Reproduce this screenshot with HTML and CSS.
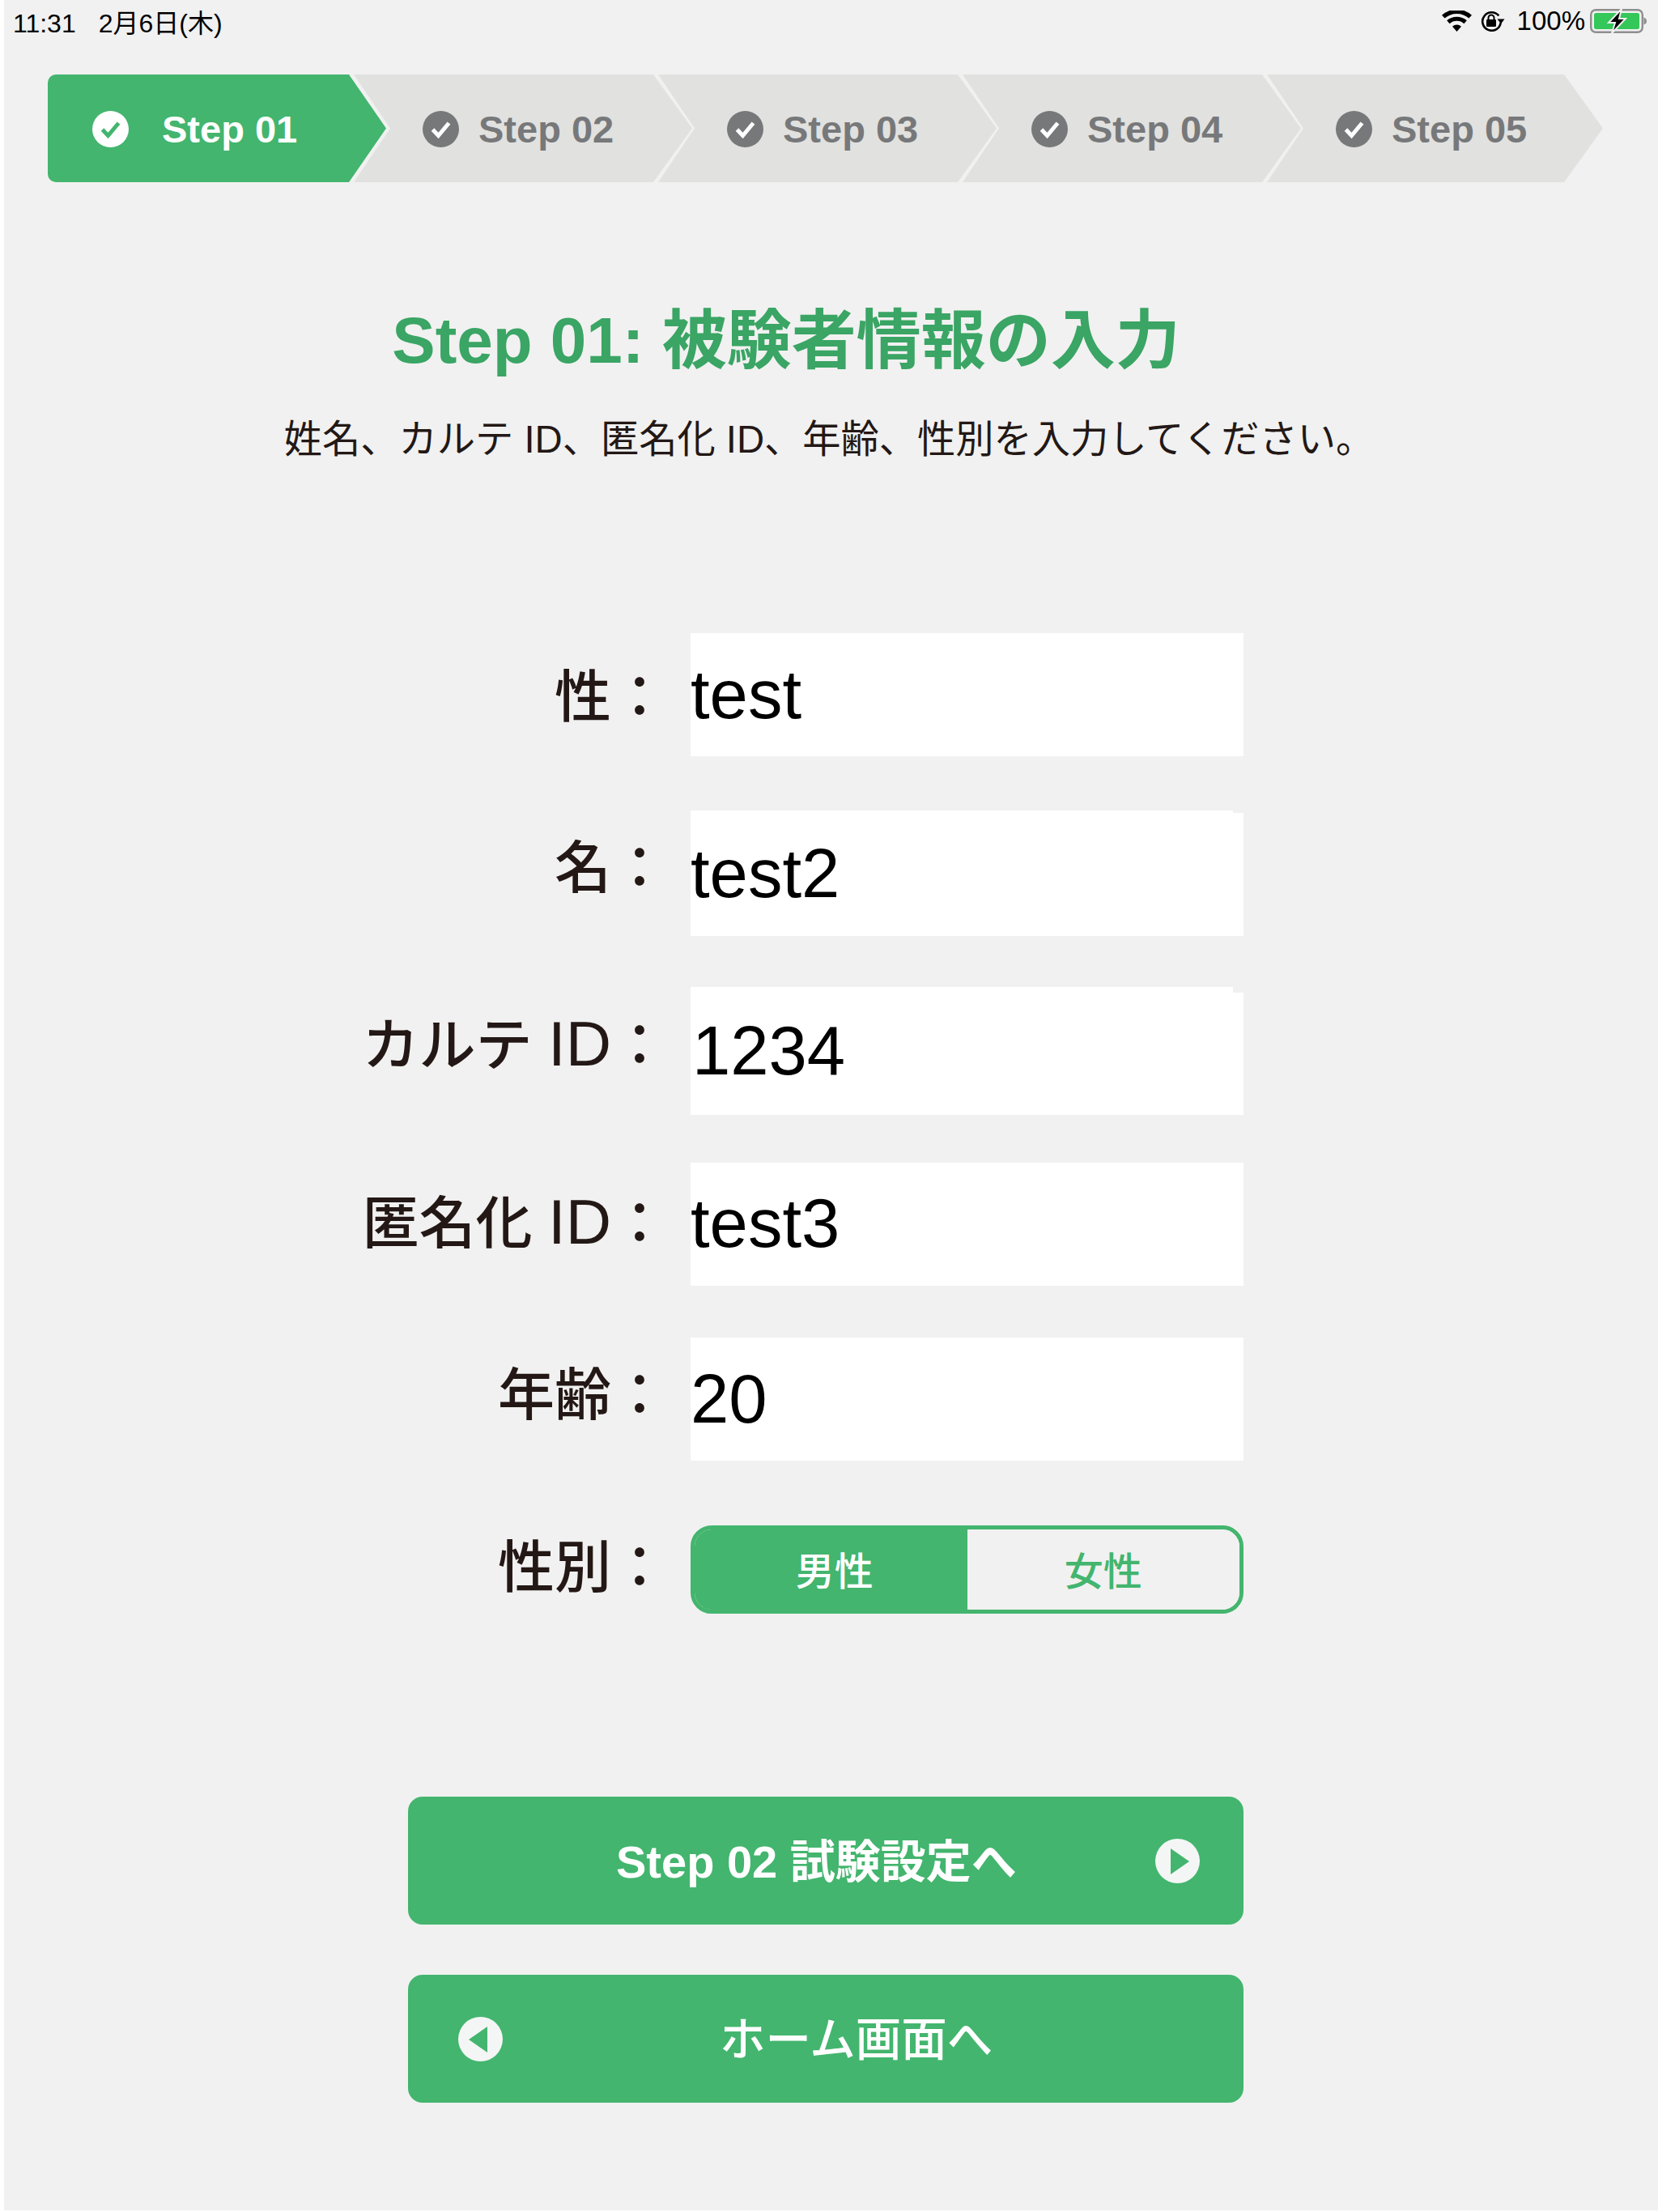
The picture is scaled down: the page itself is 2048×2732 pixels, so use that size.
FILE: index.html
```html
<!DOCTYPE html>
<html lang="ja">
<head>
<meta charset="utf-8">
<title>Step 01</title>
<link rel="stylesheet" href="styles.css">
</head>
<body>
<div class="screen">
  <header class="statusbar">
    <div class="status-left"><span>11:31</span><span>2月6日(木)</span></div>
    <div class="status-right">
      <svg class="ico-wifi" viewBox="0 0 37 26"><path d="M18.500 26l-5.500-6.200a8 8 0 0 1 11 0zM9.600 16.200l-3.400-3.900a18.600 18.600 0 0 1 24.600 0l-3.400 3.900a13.400 13.400 0 0 0-17.800 0zM3.600 9.600L0 5.700a27.600 27.600 0 0 1 37 0l-3.600 3.900a22.400 22.400 0 0 0-29.800 0z" fill="#000"/></svg>
      <svg class="ico-lock" viewBox="0 0 30 26"><path d="M23.500 8.500A11.300 11.300 0 1 0 24 17.500" fill="none" stroke="#000" stroke-width="2.600" transform="rotate(-12 13 13)"/><path d="M20.500 10.500h9l-4.500 6z" fill="#000"/><rect x="7" y="11" width="12" height="9" rx="1.200" fill="#000"/><path d="M9.500 12V9a3.500 3.500 0 0 1 7 0V12" fill="none" stroke="#000" stroke-width="2"/></svg>
      <span class="battery-text">100%</span>
      <svg class="ico-battery" viewBox="0 0 70 30"><rect x="1.200" y="1.200" width="63.600" height="27.600" rx="6" fill="none" stroke="#8e8e8e" stroke-width="2.400"/><rect x="5" y="5" width="56" height="20" rx="2.500" fill="#34c759"/><path d="M66.500 10.500c2 .5 3.500 2.400 3.500 4.500s-1.500 4-3.500 4.500z" fill="#8e8e8e"/><path d="M39 0L23 17h8l-4 13 17-18h-8z" fill="#000" stroke="#f1f1f1" stroke-width="2"/></svg>
    </div>
  </header>

  <nav class="stepper">
    <div class="step step-active">
      <svg class="step-icon" viewBox="0 0 45 45"><circle cx="22.500" cy="22.500" r="22.500" fill="#fff"/><path d="M12.500 23l7 7.500 13-15.500" fill="none" stroke="#43b56e" stroke-width="5"/></svg>
      <span>Step 01</span>
    </div>
    <div class="step">
      <svg class="step-icon" viewBox="0 0 45 45"><circle cx="22.500" cy="22.500" r="22.500" fill="#77787a"/><path d="M12.500 23l7 7.500 13-15.500" fill="none" stroke="#fff" stroke-width="5"/></svg>
      <span>Step 02</span>
    </div>
    <div class="step">
      <svg class="step-icon" viewBox="0 0 45 45"><circle cx="22.500" cy="22.500" r="22.500" fill="#77787a"/><path d="M12.500 23l7 7.500 13-15.500" fill="none" stroke="#fff" stroke-width="5"/></svg>
      <span>Step 03</span>
    </div>
    <div class="step">
      <svg class="step-icon" viewBox="0 0 45 45"><circle cx="22.500" cy="22.500" r="22.500" fill="#77787a"/><path d="M12.500 23l7 7.500 13-15.500" fill="none" stroke="#fff" stroke-width="5"/></svg>
      <span>Step 04</span>
    </div>
    <div class="step">
      <svg class="step-icon" viewBox="0 0 45 45"><circle cx="22.500" cy="22.500" r="22.500" fill="#77787a"/><path d="M12.500 23l7 7.500 13-15.500" fill="none" stroke="#fff" stroke-width="5"/></svg>
      <span>Step 05</span>
    </div>
  </nav>

  <section class="intro">
    <h1 class="title">Step 01: 被験者情報の入力</h1>
    <p class="lead">姓名、カルテ ID、匿名化 ID、年齢、性別を入力してください。</p>
  </section>

  <form class="form">
    <div class="row row-sei">
      <div class="label">性：</div>
      <div class="field">test</div>
    </div>
    <div class="row row-mei">
      <div class="label">名：</div>
      <div class="field field-notch-small">test2</div>
    </div>
    <div class="row row-chart">
      <div class="label">カルテ <span class="label-latin">ID</span>：</div>
      <div class="field field-notch-large">1234</div>
    </div>
    <div class="row row-anon">
      <div class="label">匿名化 <span class="label-latin">ID</span>：</div>
      <div class="field">test3</div>
    </div>
    <div class="row row-age">
      <div class="label">年齢：</div>
      <div class="field">20</div>
    </div>
    <div class="row row-sex">
      <div class="label">性別：</div>
      <div class="toggle">
        <div class="toggle-on">男性</div>
        <div class="toggle-off">女性</div>
      </div>
    </div>
  </form>

  <div class="actions">
    <a class="button button-next">
      <span>Step 02 試験設定へ</span>
      <svg class="button-icon" viewBox="0 0 55 55"><circle cx="27.500" cy="27.500" r="27.500" fill="#f4f6f5"/><path d="M19 12l23 16-23 16z" fill="#43b56e"/></svg>
    </a>
    <a class="button button-home">
      <svg class="button-icon" viewBox="0 0 55 55"><circle cx="27.500" cy="27.500" r="27.500" fill="#f4f6f5"/><path d="M36 12L13 28l23 16z" fill="#43b56e"/></svg>
      <span>ホーム画面へ</span>
    </a>
  </div>
</div>
</body>
</html>
```
FILE: styles.css
```css
* {
  box-sizing: border-box;
}

html,
body {
  margin: 0;
  background: #fff;
}

body {
  font-family: "Liberation Sans", "Noto Sans CJK JP", sans-serif;
  color: #231815;
}

.screen {
  width: 2043px;
  height: 2730px;
  margin-left: 5px;
  background: #f1f1f1;
  overflow: hidden;
}

/* status bar */
.statusbar {
  display: flex;
  justify-content: space-between;
  align-items: center;
  height: 52px;
  padding: 0 14px 0 11px;
  color: #000;
  font-size: 32px;
}

.status-left {
  display: flex;
  align-items: baseline;
  gap: 28px;
}

.status-right {
  display: flex;
  align-items: center;
}

.ico-wifi {
  width: 37px;
  height: 26px;
  margin-right: 11px;
}

.ico-lock {
  width: 30px;
  height: 26px;
  margin-right: 15px;
}

.battery-text {
  margin-right: 6px;
  font-size: 33px;
}

.ico-battery {
  width: 70px;
  height: 30px;
}

/* stepper */
.stepper {
  display: flex;
  height: 133px;
  margin: 40px 0 0 54px;
}

.step {
  display: flex;
  align-items: center;
  gap: 24px;
  flex: none;
  width: 418px;
  padding: 2px 0 0 85px;
  background: #e1e1df;
  color: #77787a;
  font-size: 47px;
  font-weight: 700;
  clip-path: polygon(0 0, calc(100% - 48px) 0, 100% 50%, calc(100% - 48px) 100%, 0 100%, 45px 50%);
}

.step + .step {
  margin-left: -42px;
}

.step-active + .step {
  margin-left: -40px;
}

.step:last-child {
  width: 415px;
}

.step-active {
  padding-left: 55px;
  gap: 41px;
  background: #43b56e;
  color: #fff;
  border-radius: 10px 0 0 10px;
  clip-path: polygon(0 0, calc(100% - 46px) 0, 100% 50%, calc(100% - 46px) 100%, 0 100%);
}

.step-icon {
  width: 45px;
  height: 45px;
  flex: none;
}

/* heading */
.intro {
  margin-top: 149px;
  text-align: center;
}

.title {
  margin: 0 111px 0 0;
  font-size: 80px;
  line-height: 94px;
  font-weight: 700;
  color: #3aa564;
}

.lead {
  margin: 45px 5px 0 0;
  font-size: 47.25px;
  line-height: 60px;
  font-weight: 400;
}

/* form */
.form {
  display: flex;
  flex-direction: column;
  margin-top: 209px;
}

.row {
  display: flex;
  justify-content: flex-end;
  align-items: center;
  gap: 28px;
  width: 1531px;
}

.row-sei {
  height: 152px;
  margin-bottom: 67px;
}

.row-mei {
  height: 155px;
  margin-bottom: 63px;
}

.row-chart {
  height: 158px;
  margin-bottom: 59px;
}

.row-anon {
  height: 152px;
  margin-bottom: 64px;
}

.row-age {
  height: 152px;
  margin-bottom: 80px;
}

.row-sex {
  height: 109px;
  margin-bottom: 1px;
}

.label {
  font-size: 70px;
  line-height: 90px;
  white-space: nowrap;
  font-weight: 500;
}

.label-latin {
  font-size: 78px;
  line-height: 1;
}

.row-sei .label {
  padding-top: 8px;
}

.row-mei .label,
.row-chart .label {
  padding-bottom: 12px;
}

.row-age .label {
  padding-bottom: 9px;
}

.row-sex .label {
  padding-bottom: 3px;
}

.field {
  position: relative;
  flex: none;
  width: 683px;
  height: 100%;
  display: flex;
  align-items: center;
  background: #fff;
  color: #000;
  font-size: 85px;
}

.field-notch-small::after,
.field-notch-large::after {
  content: "";
  position: absolute;
  top: 0;
  right: 0;
  width: 13px;
  background: #f1f1f1;
}

.field-notch-small::after {
  height: 3px;
}

.field-notch-large::after {
  height: 7px;
}

.row-chart .field {
  padding-left: 2px;
}

.row-anon .field {
  padding-bottom: 2px;
}

/* toggle */
.toggle {
  display: flex;
  flex: none;
  width: 683px;
  height: 100%;
  border: 5px solid #43b56e;
  border-radius: 26px;
  overflow: hidden;
  font-size: 48px;
  font-weight: 500;
}

.toggle-on,
.toggle-off {
  display: flex;
  align-items: center;
  justify-content: center;
  flex: none;
  width: 50%;
  padding-bottom: 4px;
}

.toggle-on {
  padding-left: 9px;
  background: #43b56e;
  color: #fff;
}

.toggle-off {
  background: #f1f1f1;
  color: #43b56e;
}

/* buttons */
.actions {
  display: flex;
  flex-direction: column;
  gap: 62px;
  width: 1032px;
  margin: 225px 0 0 499px;
}

.button {
  display: flex;
  align-items: center;
  height: 158px;
  border-radius: 18px;
  background: #43b56e;
  color: #fff;
  font-size: 56px;
}

.button span {
  padding-bottom: 8px;
}

.button-next {
  justify-content: space-between;
  padding: 0 54px 0 257px;
  font-weight: 700;
}

.button-home {
  gap: 268px;
  padding-left: 62px;
  font-size: 56.5px;
  font-weight: 500;
}

.button-icon {
  width: 55px;
  height: 55px;
  flex: none;
}
```
